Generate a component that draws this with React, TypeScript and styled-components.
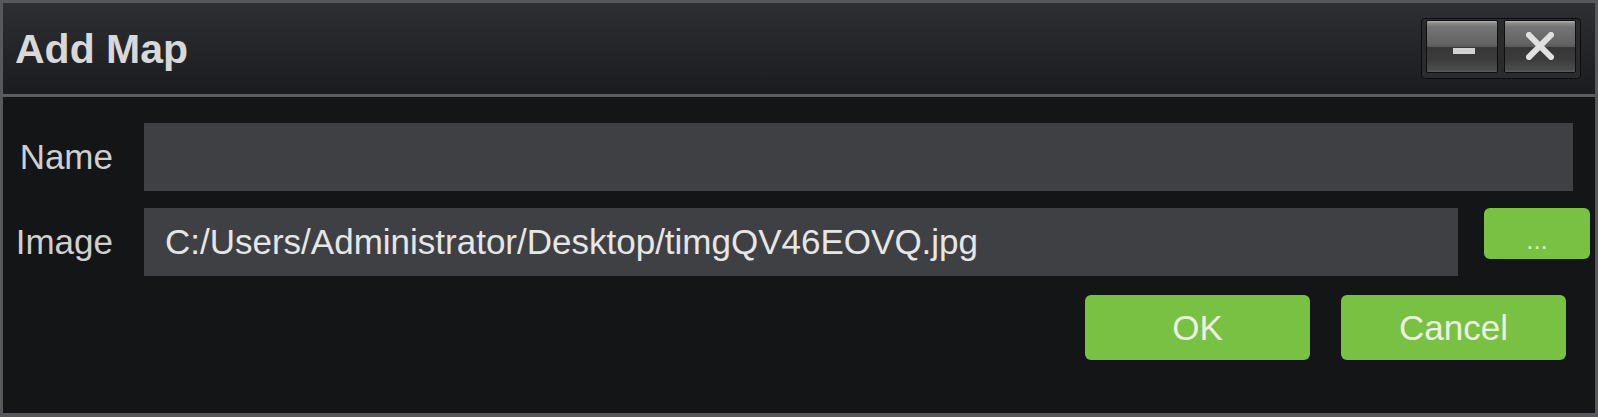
import React from "react";
import styled, { createGlobalStyle } from "styled-components";

const Global = createGlobalStyle`
  html, body { margin: 0; padding: 0; background: #141517; }
  * { box-sizing: border-box; }
`;

const Window = styled.div`
  width: 1598px;
  height: 417px;
  border: 3px solid #57585b;
  border-bottom-width: 4px;
  background: #141517;
  display: flex;
  flex-direction: column;
  font-family: "Liberation Sans", Arial, sans-serif;
`;

const TitleBar = styled.div`
  height: 94px;
  flex: none;
  display: flex;
  align-items: center;
  justify-content: space-between;
  padding: 0 14px 0 12px;
  background: linear-gradient(to bottom, #2e2f32 0%, #232427 55%, #1b1c1f 100%);
  border-bottom: 3px solid #5b5c5e;
`;

const Title = styled.div`
  font-size: 41px;
  font-weight: bold;
  color: #d8d8d8;
  margin-top: 2px;
`;

const WinCtrls = styled.div`
  display: flex;
  gap: 6px;
  padding: 1px 4px 5px 4px;
  background: #2a2b2d;
  border: 1px solid #0d0d0e;
  border-radius: 4px;
  margin-top: -1px;
`;

const WinBtn = styled.div`
  width: 72px;
  height: 53px;
  border: 1px solid #0f0f10;
  border-radius: 2px;
  display: flex;
  align-items: center;
  justify-content: center;
  background: linear-gradient(
    to bottom,
    #b4b4b4 0px,
    #8c8c8c 2px,
    #747474 6px,
    #636363 45%,
    #5a5a5a 50%,
    #373737 52%,
    #3b3b3b 75%,
    #4c4c4c 96%,
    #5e5e5e 100%
  );
`;

const MinusBar = styled.span`
  width: 22px;
  height: 6px;
  background: #d2d2d2;
  margin-top: 10px;
  margin-left: 3px;
`;

const Body = styled.div`
  flex: 1;
  display: flex;
  flex-direction: column;
  padding-top: 26px;
`;

const Row = styled.div<{ $pr: number; $mb: number }>`
  display: flex;
  align-items: flex-start;
  gap: 31px;
  padding-right: ${(p) => p.$pr}px;
  margin-bottom: ${(p) => p.$mb}px;
`;

const Label = styled.div`
  width: 110px;
  height: 68px;
  flex: none;
  display: flex;
  align-items: center;
  justify-content: flex-end;
  font-size: 35px;
  color: #cfcfcf;
`;

const Field = styled.input`
  flex: 1;
  min-width: 0;
  height: 68px;
  border: none;
  outline: none;
  background: #3f4043;
  color: #e6e6e6;
  font-family: "Liberation Sans", Arial, sans-serif;
  font-size: 35px;
  padding: 0 0 0 21px;
  margin: 0;
`;

const GreenButton = styled.button<{ $w: number; $h: number; $fs: number }>`
  width: ${(p) => p.$w}px;
  height: ${(p) => p.$h}px;
  flex: none;
  border: none;
  border-radius: 6px;
  background: #79c142;
  color: #ebf2e2;
  font-family: "Liberation Sans", Arial, sans-serif;
  font-size: ${(p) => p.$fs}px;
  padding: 0;
  cursor: pointer;
`;

const BrowseButton = styled(GreenButton)`
  padding-top: 14px;
  margin-left: -5px;
  color: #d9ebc9;
`;

const Actions = styled.div`
  display: flex;
  justify-content: flex-end;
  gap: 31px;
  padding-right: 29px;
`;

const CloseIcon = () => (
  <svg width="28" height="28" viewBox="0 0 28 28">
    <path d="M3 3 L25 25 M25 3 L3 25" stroke="#e0e0e0" strokeWidth="6" strokeLinecap="square" />
  </svg>
);

export default function App() {
  return (
    <>
      <Global />
      <Window>
        <TitleBar>
          <Title>Add Map</Title>
          <WinCtrls>
            <WinBtn>
              <MinusBar />
            </WinBtn>
            <WinBtn>
              <CloseIcon />
            </WinBtn>
          </WinCtrls>
        </TitleBar>
        <Body>
          <Row $pr={22} $mb={17}>
            <Label>Name</Label>
            <Field readOnly defaultValue="" />
          </Row>
          <Row $pr={5} $mb={19}>
            <Label>Image</Label>
            <Field readOnly defaultValue="C:/Users/Administrator/Desktop/timgQV46EOVQ.jpg" />
            <BrowseButton $w={106} $h={51} $fs={26}>
              ...
            </BrowseButton>
          </Row>
          <Actions>
            <GreenButton $w={225} $h={65} $fs={35}>OK</GreenButton>
            <GreenButton $w={225} $h={65} $fs={35}>Cancel</GreenButton>
          </Actions>
        </Body>
      </Window>
    </>
  );
}
